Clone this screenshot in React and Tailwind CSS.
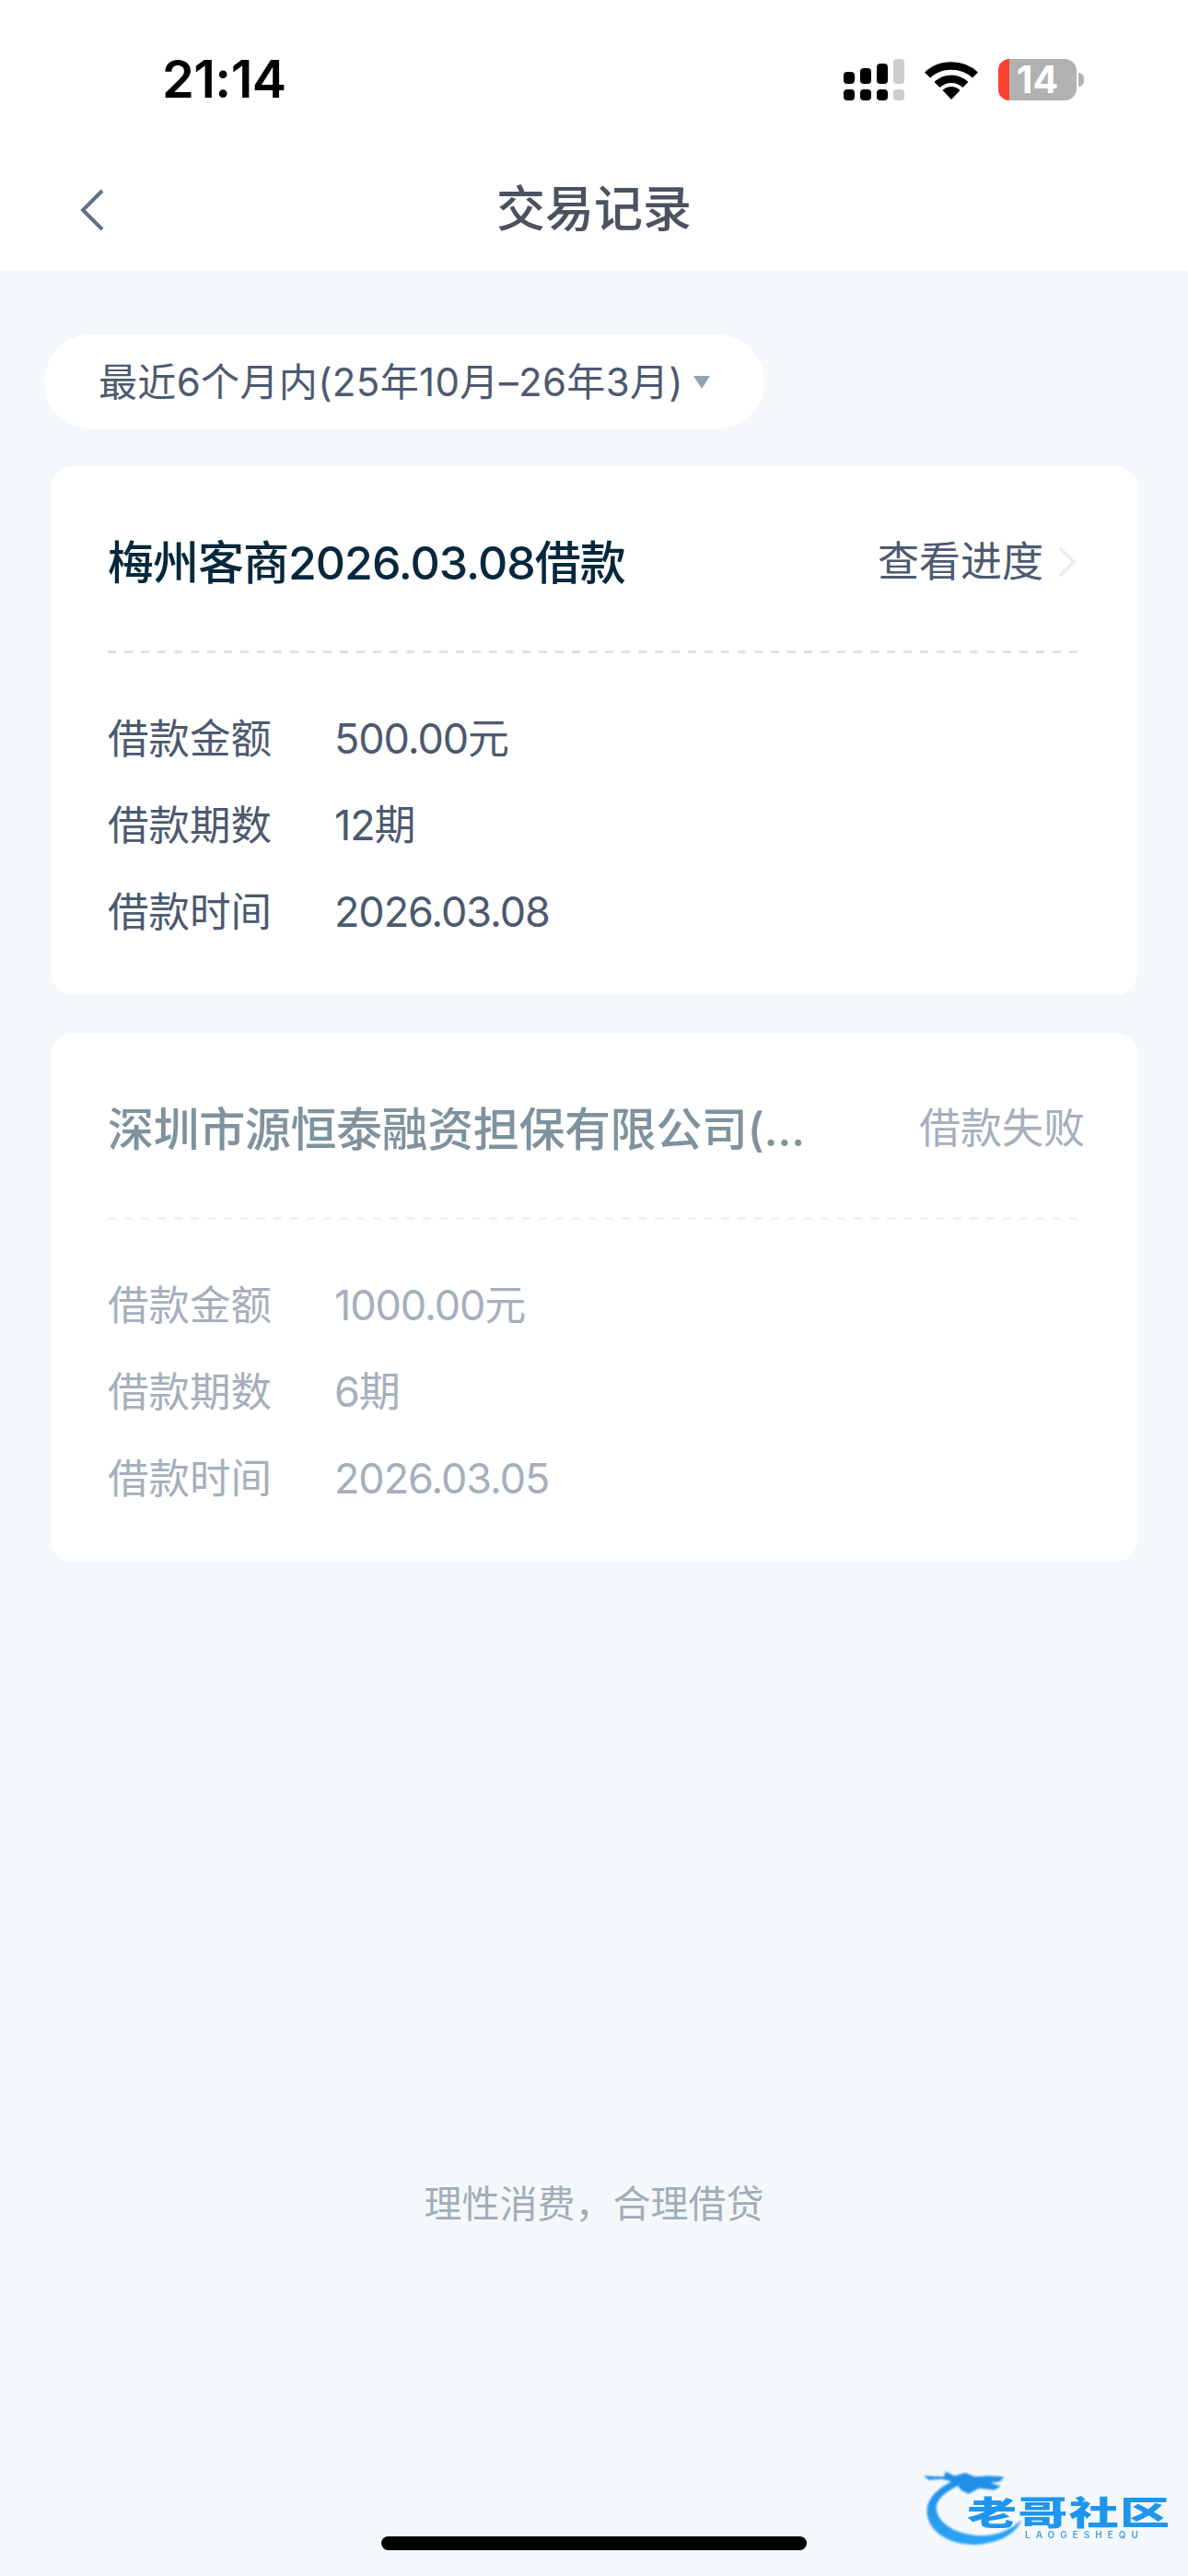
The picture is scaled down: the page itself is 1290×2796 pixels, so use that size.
const FONT = "font-['Inter','Noto_Sans_CJK_SC',sans-serif]";

function Signal() {
  const bars = [
    { h: 'h-[13px]', c: 'bg-black' },
    { h: 'h-[17px]', c: 'bg-black' },
    { h: 'h-[22px]', c: 'bg-black' },
    { h: 'h-[27px]', c: 'bg-[#cccccc]' },
  ];
  return (
    <div className="flex gap-[6px]">
      {bars.map((b, i) => (
        <div key={i} className="flex h-[45px] w-[12px] flex-col justify-end gap-[6px]">
          <div className={`${b.h} w-full rounded-[4px] ${b.c}`} />
          <div className={`h-[12px] w-full rounded-[4px] ${b.c}`} />
        </div>
      ))}
    </div>
  );
}

function Wifi() {
  return (
    <svg width="58" height="42" viewBox="0 0 58 42" fill="none">
      <path d="M3 15.5C17 2 41 2 55 15.5" stroke="#000" strokeWidth="8.5" />
      <path d="M13.5 26C22.5 17.5 35.5 17.5 44.5 26" stroke="#000" strokeWidth="8.5" />
      <path d="M19.5 32C25 26.5 33 26.5 38.5 32L29 42Z" fill="#000" />
    </svg>
  );
}

function Battery() {
  return (
    <div className="flex items-center gap-[2px]">
      <div className="relative flex h-[45px] w-[85px] items-center justify-center rounded-[13px] bg-[#b1b1b1]">
        <div className="absolute inset-y-0 left-0 w-[12px] rounded-l-[13px] bg-[#fe4033]" />
        <span className="relative font-['Inter',sans-serif] text-[41px] leading-[45px] font-bold text-white">14</span>
      </div>
      <div className="h-[15px] w-[6px] rounded-r-full bg-[#b1b1b1]" />
    </div>
  );
}

function Row({ label, value, muted }) {
  return (
    <div className={`flex h-[94px] items-center text-[45px] ${muted ? 'text-[#a6afbc]' : 'text-[#4c5a70]'}`}>
      <span className="w-[246px] shrink-0 text-[44.5px]">{label}</span>
      <span className="tracking-[-1.1px]">{value}</span>
    </div>
  );
}

function Card({ title, right, rows, muted }) {
  return (
    <section className="h-[574px] rounded-[24px] bg-white pr-[57px] pl-[62px]">
      <div className="flex h-[200px] items-center justify-between pt-[10px]">
        <h2 className={`text-[50px] font-medium ${muted ? 'tracking-[-0.4px] text-[#7f929e]' : 'tracking-[-1px] text-[#06283c]'}`}>{title}</h2>
        {right}
      </div>
      <div
        className={`h-[3px] w-[1056px] ${
          muted
            ? 'bg-[repeating-linear-gradient(90deg,#f0f1f7_0,#f0f1f7_9px,transparent_9px,transparent_18px)]'
            : 'bg-[repeating-linear-gradient(90deg,#e0e3ee_0,#e0e3ee_9px,transparent_9px,transparent_18px)]'
        }`}
      />
      <div className="pt-[46px]">
        {rows.map((r) => (
          <Row key={r[0]} label={r[0]} value={r[1]} muted={muted} />
        ))}
      </div>
    </section>
  );
}

function Watermark() {
  return (
    <div className="absolute left-[980px] top-[2660px] h-[136px] w-[310px]">
      <svg className="absolute inset-0 blur-[0.8px]" width="310" height="136" viewBox="0 0 930 408">
        <defs>
          <linearGradient id="lg" x1="0" y1="0" x2="0" y2="1">
            <stop offset="0" stopColor="#1f8fe8" />
            <stop offset="1" stopColor="#2aa5f5" />
          </linearGradient>
        </defs>
        <path d="M170 95C105 125 75 165 80 205C88 275 170 312 250 305C320 298 370 270 388 225C350 262 300 280 240 276C170 270 115 235 110 190C108 160 140 130 195 108Z" fill="url(#lg)" />
        <path d="M70 82L135 85L140 68L170 82L205 72L235 85L280 82L330 85L320 100L285 105L320 115L300 128L250 122L215 140L190 128L175 105L130 92L85 95Z" fill="#1f8fe8" />
      </svg>
      <div className="absolute left-[70px] top-[45px] flex h-[40px] w-[220px] scale-y-[0.68] justify-between font-['Noto_Sans_CJK_SC',sans-serif] text-[54px] leading-[40px] font-black text-[#1e96ee] blur-[0.6px]">
        <span>老</span><span>哥</span><span>社</span><span>区</span>
      </div>
      <span className="absolute left-[133px] top-[85px] font-['Inter',sans-serif] text-[10px] leading-[12px] font-semibold tracking-[6px] text-[#4a9fdc] blur-[0.3px]">LAOGESHEQU</span>
    </div>
  );
}

export default function App() {
  return (
    <div className={`relative flex h-[2796px] w-[1290px] flex-col overflow-hidden bg-[#f4f8fb] ${FONT}`}>
      <header className="h-[294px] shrink-0 bg-white">
        <div className="flex h-[174px] items-start justify-between pt-[64px] pr-[113px] pl-[176px]">
          <span className="font-['Inter',sans-serif] text-[56px] leading-[45px] font-semibold tracking-[-0.6px] text-black">21:14</span>
          <div className="flex items-center gap-[22px]">
            <Signal />
            <Wifi />
            <Battery />
          </div>
        </div>
        <div className="flex h-[108px] items-center justify-between px-[87px]">
          <svg width="26" height="46" viewBox="0 0 26 46" fill="none">
            <path d="M24 2L3 23L24 44" stroke="#5f7186" strokeWidth="4" />
          </svg>
          <h1 className="text-[53px] font-medium text-[#4b5260]">交易记录</h1>
          <div className="w-[26px]" />
        </div>
      </header>

      <div className="mt-[69px] ml-[48px] flex h-[103px] w-[782px] shrink-0 items-center rounded-full bg-white pl-[59px] text-[42px] tracking-[0.35px] text-[#4c5a70]">
        <span>最近6个月内(25年10月–26年3月)</span>
        <svg className="ml-[11px]" width="18" height="14" viewBox="0 0 18 14">
          <path d="M0 0H18L9 14Z" fill="#95a3ae" />
        </svg>
      </div>

      <main className="mt-[40px] flex flex-col gap-[41px] px-[55px]">
        <Card
          title="梅州客商2026.03.08借款"
          right={
            <div className="-mt-[2px] flex items-center">
              <span className="text-[45px] text-[#4c5a70]">查看进度</span>
              <svg className="ml-[16px] mr-[9px]" width="20" height="34" viewBox="0 0 20 34" fill="none">
                <path d="M2 2L17 17L2 32" stroke="#e9edf4" strokeWidth="3.5" />
              </svg>
            </div>
          }
          rows={[
            ['借款金额', '500.00元'],
            ['借款期数', '12期'],
            ['借款时间', '2026.03.08'],
          ]}
        />
        <Card
          muted
          title="深圳市源恒泰融资担保有限公司(..."
          right={<span className="-mt-[2px] text-[45px] text-[#a6afbc]">借款失败</span>}
          rows={[
            ['借款金额', '1000.00元'],
            ['借款期数', '6期'],
            ['借款时间', '2026.03.05'],
          ]}
        />
      </main>

      <p className="mt-[667px] text-center text-[41px] leading-[60px] text-[#a2adb9]">理性消费，合理借贷</p>

      <div className="mx-auto mt-[331px] h-[15px] w-[462px] shrink-0 rounded-full bg-black" />
      <Watermark />
    </div>
  );
}
